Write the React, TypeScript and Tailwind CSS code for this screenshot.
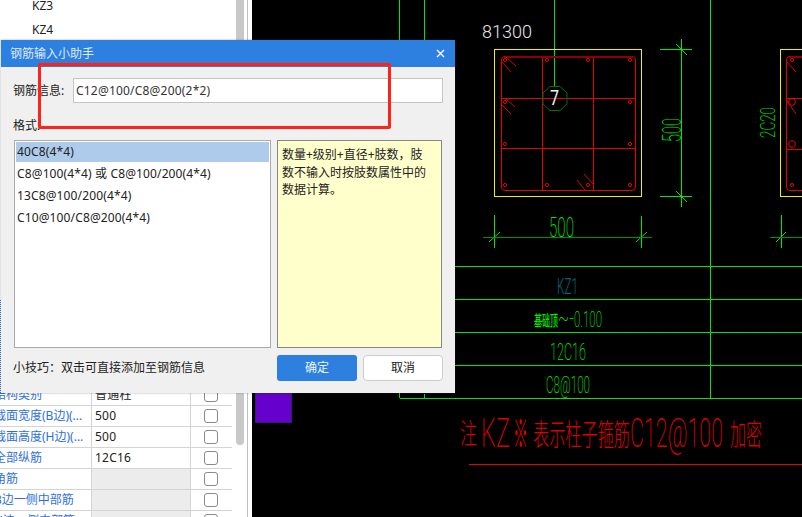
const cjk = "font-['Noto_Sans','Noto_Sans_CJK_SC',sans-serif]";

const rows: { label: string; value: string; gray?: boolean }[] = [
  { label: "结构类别", value: "普通柱" },
  { label: "截面宽度(B边)(...", value: "500" },
  { label: "截面高度(H边)(...", value: "500" },
  { label: "全部纵筋", value: "12C16" },
  { label: "角筋", value: "", gray: true },
  { label: "B边一侧中部筋", value: "", gray: true },
  { label: "H边一侧中部筋", value: "", gray: true },
];

const formats = [
  "40C8(4*4)",
  "C8@100(4*4) 或 C8@100/200(4*4)",
  "13C8@100/200(4*4)",
  "C10@100/C8@200(4*4)",
];

function LeftPanel() {
  return (
    <div className="relative flex h-full w-[252px] shrink-0 overflow-hidden bg-white text-[12px] text-[#222]">
      <div className="flex w-[236px] flex-col">
        <div className="flex flex-col">
          <div className="flex h-[24px] items-center pl-[32px] -mt-[6px]">KZ3</div>
          <div className="flex h-[24px] items-center pl-[32px]">KZ4</div>
        </div>
        <div className="mt-[343px] w-[232px] overflow-hidden">
          {rows.map((r) => (
            <div key={r.label} className="flex h-[21px] border-b border-[#d4d4d4]">
              <div className="w-[92px] shrink-0 overflow-visible whitespace-nowrap border-r border-[#d4d4d4] -indent-[6px] leading-[20px] text-[#2f6fe0]">
                {r.label}
              </div>
              <div className={`w-[99px] shrink-0 border-r border-[#d4d4d4] pl-[3px] leading-[20px] tracking-[0.2px] ${r.gray ? "bg-[#ececec]" : ""}`}>
                {r.value}
              </div>
              <div className="flex w-[41px] items-center justify-center pr-[1px]">
                <div className="h-[14px] w-[14px] rounded-[3px] border border-[#8a8a8a] bg-white" />
              </div>
            </div>
          ))}
        </div>
      </div>
      <div className="flex w-[8px] flex-col">
        <div className="h-[445px] rounded-b-[4px] bg-[#c8c8c8]" />
      </div>
      <div className="ml-[3px] w-[1px] bg-[#c0c0c0]" />
    </div>
  );
}

const cadFont = "Roboto,'Noto Sans CJK SC',sans-serif";

function Cad({ x, y, len, size, fill, weight = 200, children, transform }: {
  x?: number; y?: number; len: number; size: number; fill: string; weight?: number; children: string; transform?: string;
}) {
  return (
    <text x={x} y={y} transform={transform} fill={fill} fontSize={size} fontWeight={weight} fontFamily={cadFont} textLength={len} lengthAdjust="spacingAndGlyphs">
      {children}
    </text>
  );
}

function CadDrawing() {
  const g = "#00e800";
  const red = "#d80000";
  const line = "#e60000";
  const circles: [number, number][] = [
    [547, 60], [588, 60], [630, 60], [630, 102], [630, 144], [630, 185], [588, 185], [547, 185], [505, 185], [505, 144], [505, 102], [505, 60],
  ];
  return (
    <svg className="h-full w-[550px]" viewBox="252 0 550 517" shapeRendering="crispEdges">
      <g stroke={g} strokeWidth="1" fill="none">
        <path d="M399.5 0V398M424.5 0V40M424.5 394V398M554.5 0V86M710.5 0V398" />
        <path d="M399.5 266.5H802M399.5 299.5H802M399.5 332.5H802M399.5 365.5H802M399.5 398.5H802" />
        <path d="M681.5 39V207M660 49.5H692M660 196.5H692" />
        <path d="M641.5 216V248M781.5 215V248M494.5 215V248" />
      </g>
      <g stroke={g} strokeWidth="1" shapeRendering="auto">
        <path d="M676 44L687 55M676 191L687 202M636 242L647 232M776 242L786 232M489 242L500 232" />
      </g>
      <path d="M483 237.5H652M770 237.5H802" stroke="#009000" strokeWidth="1" />
      <rect x="494.5" y="49.5" width="147" height="147" fill="none" stroke="#f0f000" />
      <rect x="780.5" y="49.5" width="40" height="147" fill="none" stroke="#f0f000" />
      <g fill="none" stroke={line} strokeWidth="1">
        <path d="M501.5 60V187M635.5 60V187M505 190.5H632" />
        <path d="M542.5 57V190M593.5 57V190M502 98.5H635M502 148.5H635" />
        <path d="M786.5 60V187M790 190.5H802M787 98.5H802M787 149.5H802" />
      </g>
      <path d="M504 56.5H632M789 56.5H802" stroke="#8c0000" strokeWidth="2" />
      <g fill="none" stroke={line} strokeWidth="1" shapeRendering="auto">
        <path d="M501.5 60Q501.5 56.5 505 56.5M632 56.5Q635.5 56.5 635.5 60M501.5 187Q501.5 190.5 505 190.5M632 190.5Q635.5 190.5 635.5 187M786.5 60Q786.5 56.5 790 56.5M786.5 187Q786.5 190.5 790 190.5" />
        {circles.map(([x, y]) => (
          <circle key={`${x}-${y}`} cx={x} cy={y} r="1.6" />
        ))}
        <path d="M502 62L511 72M506 57L516 66M502 105L511 114M505 98L515 107M577 180L585 190M584 174L593 184" />
        <path d="M787 62L796 72M787 101L796 114" />
        <circle cx="792" cy="60" r="1.6" />
        <circle cx="792" cy="102" r="3.4" />
        <circle cx="792" cy="144" r="3.4" />
        <circle cx="792" cy="185" r="1.6" />
      </g>
      <polygon points="550,86.5 560,86.5 567,93 567,104 560,110.5 550,110.5 543,104 543,93" fill="none" stroke="#007000" strokeWidth="1" shapeRendering="auto" />
      <g shapeRendering="auto">
        <Cad x={550} y={105} len={9} size={20} fill="#f4f4f4" weight={400}>7</Cad>
        <Cad x={482} y={38} len={50} size={19} fill="#e8e8e8" weight={300}>81300</Cad>
        <Cad x={549} y={237} len={25} size={27} fill={g}>500</Cad>
        <Cad transform="translate(681 142) rotate(-90)" len={24} size={26} fill={g}>500</Cad>
        <Cad transform="translate(775 138) rotate(-90)" len={31} size={21} fill={g}>2C20</Cad>
        <Cad x={557} y={294} len={21} size={22} fill="#006878" weight={300}>KZ1</Cad>
        <Cad x={534} y={326} len={24} size={15} fill={g} weight={500}>基础顶</Cad>
        <Cad x={558} y={326} len={16} size={22} fill={g}>~-</Cad>
        <Cad x={574} y={327} len={28} size={22} fill={g}>0.100</Cad>
        <Cad x={550} y={360} len={36} size={23} fill={g}>12C16</Cad>
        <Cad x={546} y={393} len={44} size={23} fill={g}>C8@100</Cad>
        <Cad x={460} y={444} len={17} size={28} fill={red}>注</Cad>
        <Cad x={481} y={447} len={29} size={41} fill={red}>KZ</Cad>
        <Cad x={513} y={447} len={15} size={38} fill={red}>※</Cad>
        <Cad x={533} y={445} len={97} size={30} fill={red}>表示柱子箍筋</Cad>
        <Cad x={630} y={447} len={93} size={41} fill={red}>C12@100</Cad>
        <Cad x={730} y={445} len={32} size={30} fill={red}>加密</Cad>
      </g>
      <path d="M469 464.5H802" stroke="#e80000" strokeWidth="1" />
      <rect x="255.5" y="393.5" width="36" height="29" fill="#6600cc" stroke="#3c1878" />
    </svg>
  );
}

function Dialog() {
  return (
    <div className={`absolute left-[1px] top-[40px] flex h-[353px] w-[454px] flex-col bg-[#f0f0f0] shadow-[0_0_2px_rgba(60,60,90,0.45)] text-[12px] text-[#222] ${cjk}`}>
      <div className="flex h-[27px] shrink-0 items-center justify-between bg-[#2d7fe0] pl-[9px] pr-[10px] text-[#dfeafa]">
        <span>钢筋输入小助手</span>
        <svg width="9" height="9" viewBox="0 0 9 9">
          <path d="M1 1L8 8M8 1L1 8" stroke="white" strokeWidth="1.4" />
        </svg>
      </div>
      <div className="flex flex-1 flex-col px-[12px]">
        <div className="mt-[11px] flex h-[25px] items-center">
          <span className="w-[60px] shrink-0">钢筋信息:</span>
          <div className="flex h-[25px] w-[370px] items-center border border-[#c4c4c4] bg-white pl-[2px] tracking-[0.2px] text-[#333]">
            C12@100/C8@200(2*2)
          </div>
        </div>
        <div className="mt-[13px] h-[19px] leading-[19px]">格式:</div>
        <div className="mt-[5px] flex h-[208px] gap-[6px] pl-[1px]">
          <div className="w-[257px] border border-[#aaaaaa] bg-white p-[1px]">
            {formats.map((f, i) => (
              <div key={f} className={`flex items-center whitespace-nowrap pl-[1px] tracking-[0.13px] ${i === 0 ? "mb-[1px] h-[20px] bg-[#aecbeb]" : "h-[22px]"}`}>
                {f}
              </div>
            ))}
          </div>
          <div className="w-[165px] border border-[#888888] bg-[#ffffcc] pl-[4px] pr-[8px] pt-[5px] leading-[17.5px] text-[#222]">
            {"数量+级别+直径+肢数\uFF0C肢数不输入时按肢数属性中的数据计算。"}
          </div>
        </div>
        <div className="mt-[7px] flex h-[26px] items-center">
          <span className="w-[264px] shrink-0">{"小技巧\uFF1A双击可直接添加至钢筋信息"}</span>
          <button className="h-[26px] w-[80px] rounded-[3px] bg-[#2d7fe0] text-[#eef4fc]">确定</button>
          <button className="ml-[6px] h-[26px] w-[80px] rounded-[4px] border border-[#cccccc] bg-white">取消</button>
        </div>
      </div>
    </div>
  );
}

export default function App() {
  return (
    <div className={`relative flex h-[517px] w-[802px] overflow-hidden bg-black ${cjk}`}>
      <LeftPanel />
      <CadDrawing />
      <div className="absolute left-0 top-[300px] h-[93px] border-l border-dotted border-[#2f6fe0]" />
      <Dialog />
      <div className="absolute left-[38px] top-[63px] h-[66px] w-[353px] rounded-[2px] border-[3px] border-[#ff2218]" />
    </div>
  );
}
